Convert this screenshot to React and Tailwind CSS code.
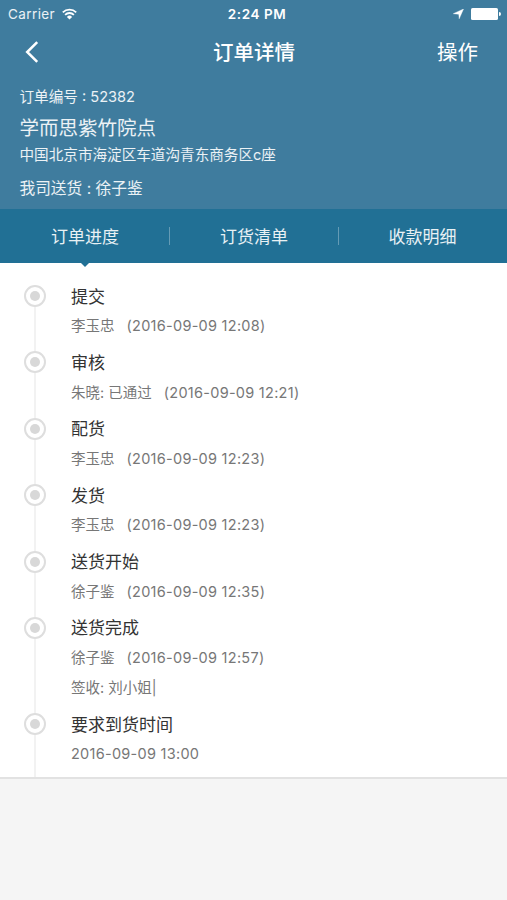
const steps = [
  { title: "提交", who: "李玉忠", time: "(2016-09-09 12:08)" },
  { title: "审核", who: "朱晓: 已通过", time: "(2016-09-09 12:21)" },
  { title: "配货", who: "李玉忠", time: "(2016-09-09 12:23)" },
  { title: "发货", who: "李玉忠", time: "(2016-09-09 12:23)" },
  { title: "送货开始", who: "徐子鉴", time: "(2016-09-09 12:35)" },
  { title: "送货完成", who: "徐子鉴", time: "(2016-09-09 12:57)", note: "签收: 刘小姐|" },
  { title: "要求到货时间", time: "2016-09-09 13:00" },
];

const tabs = ["订单进度", "订货清单", "收款明细"];

function StatusBar() {
  return (
    <div className="grid h-[27px] grid-cols-3 items-center pr-[6px] pl-[8px] text-[13.5px] leading-[27px]">
      <div className="flex items-center gap-[7px] pt-px">
        <span className="tracking-[0.4px] text-white/90">Carrier</span>
        <svg width="15" height="12" viewBox="0 0 15 12" fill="none" stroke="currentColor" strokeWidth="1.8" className="-mt-[2px]">
          <path d="M0.8 4.3a9.6 9.6 0 0 1 13.4 0" />
          <path d="M3.1 6.8a6.3 6.3 0 0 1 8.8 0" />
          <path d="M7.5 11.6 4.9 8.9a3.7 3.7 0 0 1 5.2 0z" fill="currentColor" stroke="none" />
        </svg>
      </div>
      <span className="pt-px pl-[5px] text-center font-semibold tracking-[0.55px]">2:24 PM</span>
      <div className="flex items-center justify-end gap-[7px]">
        <svg width="11" height="10" viewBox="0 0 11 10" fill="currentColor">
          <path d="M10.5 0 6.2 9.8 5.8 5.2 0.3 4.7z" stroke="currentColor" strokeWidth="0.4" />
        </svg>
        <svg width="30" height="12" viewBox="0 0 30 12" fill="currentColor">
          <rect x="0" y="0" width="27" height="12" rx="1.6" />
          <path d="M28 4a2 2 0 0 1 0 4z" />
        </svg>
      </div>
    </div>
  );
}

function NavBar() {
  return (
    <div className="grid h-[50px] grid-cols-3 items-center pr-[29px] pl-[25px] text-[20.5px]">
      <button type="button" aria-label="返回">
        <svg width="14" height="22" viewBox="0 0 14 22" fill="none" stroke="currentColor" strokeWidth="2.5">
          <path d="M12.2 1.2 2.2 11l10 9.8" />
        </svg>
      </button>
      <h1 className="pt-[2px] pl-[5px] text-center font-medium whitespace-nowrap">订单详情</h1>
      <button type="button" className="pt-[2px] text-right">操作</button>
    </div>
  );
}

function Tabs() {
  return (
    <div className="grid h-[54px] grid-cols-3 items-center bg-[#217095] text-[17px] text-white/90">
      {tabs.map((tab, i) => (
        <div
          key={tab}
          className={
            i < 2
              ? "relative left-px flex h-[18px] items-center justify-center border-r border-white/30"
              : "relative flex h-[18px] items-center justify-center"
          }
        >
          <span className="pt-[4px]">{tab}</span>
          {i === 0 ? (
            <svg className="absolute top-[35px] left-[79px]" width="10" height="5" viewBox="0 0 10 5" fill="#217095">
              <path d="M0 0h10L5 5z" />
            </svg>
          ) : null}
        </div>
      ))}
    </div>
  );
}

function Step({ step, first }) {
  return (
    <li className="flex pl-[24px]">
      <div className="flex w-[22px] flex-col items-center">
        <div className={first ? "h-[4px]" : "h-[4px] w-[2px] bg-[#f2f2f2]"} />
        <div className="flex size-[22px] shrink-0 items-center justify-center rounded-full border-[2.5px] border-[#dedede]">
          <div className="size-[10px] rounded-full bg-[#d8d8d8]" />
        </div>
        <div className="w-[2px] grow bg-[#f2f2f2]" />
      </div>
      <div className="pb-[6.5px] pl-[25px] text-[14.5px] leading-[29.7px] text-[#777]">
        <h2 className="h-[29.7px] pt-[1.5px] text-[17px] leading-[29.7px] text-[#333]">{step.title}</h2>
        <p className="flex gap-[12px] pt-[0.5px]">
          {step.who ? <span>{step.who}</span> : null}
          <span className="tracking-[0.27px]">{step.time}</span>
        </p>
        {step.note ? <p>{step.note}</p> : null}
      </div>
    </li>
  );
}

export default function App() {
  return (
    <main className="min-h-screen bg-[#f5f5f5] font-['Inter','Noto_Sans_CJK_SC',sans-serif]">
      <header className="h-[209px] bg-[#3f7c9e] text-white">
        <StatusBar />
        <NavBar />
        <div className="pt-[7px] pl-[19.5px] text-[14.6px] text-white/90">
          <p className="leading-[26px]">订单编号 : 52382</p>
          <p className="pt-px text-[19.5px] leading-[34px]">学而思紫竹院点</p>
          <p className="leading-[20px]">中国北京市海淀区车道沟青东商务区c座</p>
          <p className="mt-[11px] text-[15.7px] leading-[26px]">我司送货 : 徐子鉴</p>
        </div>
      </header>
      <Tabs />
      <section className="border-b-2 border-[#e2e2e2] bg-white pt-[18px]">
        <ul>
          {steps.map((step, i) => (
            <Step key={i} step={step} first={i === 0} />
          ))}
        </ul>
        <div className="ml-[34px] h-[2px] w-[2px] bg-[#f2f2f2]" />
      </section>
    </main>
  );
}
